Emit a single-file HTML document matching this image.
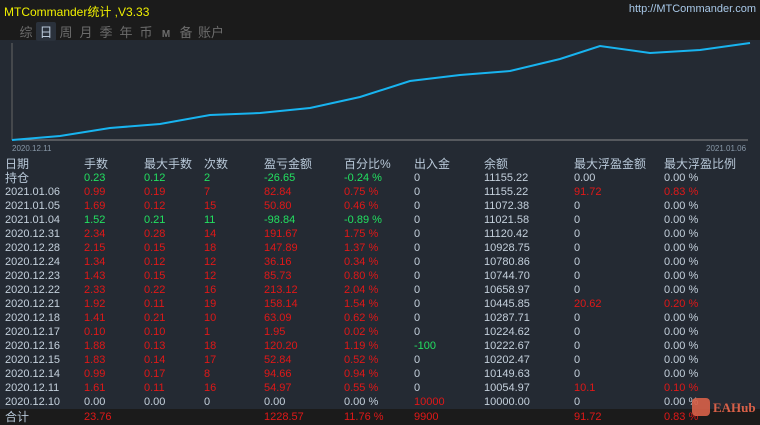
<!DOCTYPE html>
<html><head><meta charset="utf-8"><style>
*{margin:0;padding:0;box-sizing:border-box}
body{width:760px;height:425px;overflow:hidden;background:#242a33;font-family:"Liberation Sans","Noto Sans CJK SC",sans-serif;font-size:11px;color:#c4d0dc;position:relative}
.top{position:absolute;left:0;top:0;width:760px;height:40px;background:#1b1b1b}
.title{position:absolute;left:4px;top:3px;color:#f0f000;font-size:12px}
.url{position:absolute;right:4px;top:3px;color:#a8c8e8;font-size:11px}
.tabs{position:absolute;left:16px;top:22px;color:#6c6c6c;font-size:13px;letter-spacing:0}
.tabs span{display:inline-block;width:20px;text-align:center;margin-right:0}
.tabs .on{background:#2a313b;color:#b8c8d8;border-radius:2px}
.r{position:absolute;left:0;width:760px;height:14px;line-height:14px;white-space:nowrap}
.r span{position:absolute}
.c0{left:5px}.c1{left:84px}.c2{left:144px}.c3{left:204px}.c4{left:264px}.c5{left:344px}.c6{left:414px}.c7{left:484px}.c8{left:574px}.c9{left:664px}
.h{font-size:12px;color:#b8c8d8}
.R{color:#e01818}.G{color:#22e060}
.sum{position:absolute;left:0;top:409px;width:760px;height:16px;background:#1b1b1b}
</style></head><body>
<div class="top"><div class="title">MTCommander统计 ,V3.33</div><div class="url">http://MTCommander.com</div>
<div class="tabs"><span>综</span><span class="on">日</span><span>周</span><span>月</span><span>季</span><span>年</span><span>币</span><span style="font-size:10px;font-weight:bold">M</span><span>备</span><span style="width:30px">账户</span></div></div>
<svg style="position:absolute;left:0;top:40px" width="760" height="115">
<line x1="12" y1="3" x2="12" y2="100" stroke="#666" stroke-width="1"/>
<line x1="12" y1="100" x2="748" y2="100" stroke="#888" stroke-width="1"/>
<polyline fill="none" stroke="#18b4f0" stroke-width="2" points="12,100 60,96 110,88 160,84 210,75 260,73 310,68 360,57 410,41 460,35 510,31 560,19 600,6 650,13 700,10 750,3"/>
<text x="12" y="111" fill="#8898a8" font-size="8" font-family="Liberation Sans">2020.12.11</text>
<text x="706" y="111" fill="#8898a8" font-size="8" font-family="Liberation Sans">2021.01.06</text>
</svg>
<div class="sum"></div>
<div class="r h" style="top:157px"><span class="c0">日期</span><span class="c1">手数</span><span class="c2">最大手数</span><span class="c3">次数</span><span class="c4">盈亏金额</span><span class="c5">百分比%</span><span class="c6">出入金</span><span class="c7">余额</span><span class="c8">最大浮盈金额</span><span class="c9">最大浮盈比例</span></div>
<div class="r" style="top:171px"><span class="c0 h">持仓</span><span class="c1 G">0.23</span><span class="c2 G">0.12</span><span class="c3 G">2</span><span class="c4 G">-26.65</span><span class="c5 G">-0.24 %</span><span class="c6">0</span><span class="c7">11155.22</span><span class="c8">0.00</span><span class="c9">0.00 %</span></div>
<div class="r" style="top:185px"><span class="c0">2021.01.06</span><span class="c1 R">0.99</span><span class="c2 R">0.19</span><span class="c3 R">7</span><span class="c4 R">82.84</span><span class="c5 R">0.75 %</span><span class="c6">0</span><span class="c7">11155.22</span><span class="c8 R">91.72</span><span class="c9 R">0.83 %</span></div>
<div class="r" style="top:199px"><span class="c0">2021.01.05</span><span class="c1 R">1.69</span><span class="c2 R">0.12</span><span class="c3 R">15</span><span class="c4 R">50.80</span><span class="c5 R">0.46 %</span><span class="c6">0</span><span class="c7">11072.38</span><span class="c8">0</span><span class="c9">0.00 %</span></div>
<div class="r" style="top:213px"><span class="c0">2021.01.04</span><span class="c1 G">1.52</span><span class="c2 G">0.21</span><span class="c3 G">11</span><span class="c4 G">-98.84</span><span class="c5 G">-0.89 %</span><span class="c6">0</span><span class="c7">11021.58</span><span class="c8">0</span><span class="c9">0.00 %</span></div>
<div class="r" style="top:227px"><span class="c0">2020.12.31</span><span class="c1 R">2.34</span><span class="c2 R">0.28</span><span class="c3 R">14</span><span class="c4 R">191.67</span><span class="c5 R">1.75 %</span><span class="c6">0</span><span class="c7">11120.42</span><span class="c8">0</span><span class="c9">0.00 %</span></div>
<div class="r" style="top:241px"><span class="c0">2020.12.28</span><span class="c1 R">2.15</span><span class="c2 R">0.15</span><span class="c3 R">18</span><span class="c4 R">147.89</span><span class="c5 R">1.37 %</span><span class="c6">0</span><span class="c7">10928.75</span><span class="c8">0</span><span class="c9">0.00 %</span></div>
<div class="r" style="top:255px"><span class="c0">2020.12.24</span><span class="c1 R">1.34</span><span class="c2 R">0.12</span><span class="c3 R">12</span><span class="c4 R">36.16</span><span class="c5 R">0.34 %</span><span class="c6">0</span><span class="c7">10780.86</span><span class="c8">0</span><span class="c9">0.00 %</span></div>
<div class="r" style="top:269px"><span class="c0">2020.12.23</span><span class="c1 R">1.43</span><span class="c2 R">0.15</span><span class="c3 R">12</span><span class="c4 R">85.73</span><span class="c5 R">0.80 %</span><span class="c6">0</span><span class="c7">10744.70</span><span class="c8">0</span><span class="c9">0.00 %</span></div>
<div class="r" style="top:283px"><span class="c0">2020.12.22</span><span class="c1 R">2.33</span><span class="c2 R">0.22</span><span class="c3 R">16</span><span class="c4 R">213.12</span><span class="c5 R">2.04 %</span><span class="c6">0</span><span class="c7">10658.97</span><span class="c8">0</span><span class="c9">0.00 %</span></div>
<div class="r" style="top:297px"><span class="c0">2020.12.21</span><span class="c1 R">1.92</span><span class="c2 R">0.11</span><span class="c3 R">19</span><span class="c4 R">158.14</span><span class="c5 R">1.54 %</span><span class="c6">0</span><span class="c7">10445.85</span><span class="c8 R">20.62</span><span class="c9 R">0.20 %</span></div>
<div class="r" style="top:311px"><span class="c0">2020.12.18</span><span class="c1 R">1.41</span><span class="c2 R">0.21</span><span class="c3 R">10</span><span class="c4 R">63.09</span><span class="c5 R">0.62 %</span><span class="c6">0</span><span class="c7">10287.71</span><span class="c8">0</span><span class="c9">0.00 %</span></div>
<div class="r" style="top:325px"><span class="c0">2020.12.17</span><span class="c1 R">0.10</span><span class="c2 R">0.10</span><span class="c3 R">1</span><span class="c4 R">1.95</span><span class="c5 R">0.02 %</span><span class="c6">0</span><span class="c7">10224.62</span><span class="c8">0</span><span class="c9">0.00 %</span></div>
<div class="r" style="top:339px"><span class="c0">2020.12.16</span><span class="c1 R">1.88</span><span class="c2 R">0.13</span><span class="c3 R">18</span><span class="c4 R">120.20</span><span class="c5 R">1.19 %</span><span class="c6 G">-100</span><span class="c7">10222.67</span><span class="c8">0</span><span class="c9">0.00 %</span></div>
<div class="r" style="top:353px"><span class="c0">2020.12.15</span><span class="c1 R">1.83</span><span class="c2 R">0.14</span><span class="c3 R">17</span><span class="c4 R">52.84</span><span class="c5 R">0.52 %</span><span class="c6">0</span><span class="c7">10202.47</span><span class="c8">0</span><span class="c9">0.00 %</span></div>
<div class="r" style="top:367px"><span class="c0">2020.12.14</span><span class="c1 R">0.99</span><span class="c2 R">0.17</span><span class="c3 R">8</span><span class="c4 R">94.66</span><span class="c5 R">0.94 %</span><span class="c6">0</span><span class="c7">10149.63</span><span class="c8">0</span><span class="c9">0.00 %</span></div>
<div class="r" style="top:381px"><span class="c0">2020.12.11</span><span class="c1 R">1.61</span><span class="c2 R">0.11</span><span class="c3 R">16</span><span class="c4 R">54.97</span><span class="c5 R">0.55 %</span><span class="c6">0</span><span class="c7">10054.97</span><span class="c8 R">10.1</span><span class="c9 R">0.10 %</span></div>
<div class="r" style="top:395px"><span class="c0">2020.12.10</span><span class="c1">0.00</span><span class="c2">0.00</span><span class="c3">0</span><span class="c4">0.00</span><span class="c5">0.00 %</span><span class="c6 R">10000</span><span class="c7">10000.00</span><span class="c8">0</span><span class="c9">0.00 %</span></div>
<div class="r" style="top:410px"><span class="c0 h">合计</span><span class="c1 R">23.76</span><span class="c4 R">1228.57</span><span class="c5 R">11.76 %</span><span class="c6 R">9900</span><span class="c8 R">91.72</span><span class="c9 R">0.83 %</span></div>
<div style="position:absolute;left:692px;top:398px;width:18px;height:18px;background:#d86048;border-radius:4px;opacity:.9"></div>
<div style="position:absolute;left:713px;top:400px;color:#d86048;font-family:'Liberation Serif',serif;font-size:13px;font-weight:bold">EAHub</div>
</body></html>
